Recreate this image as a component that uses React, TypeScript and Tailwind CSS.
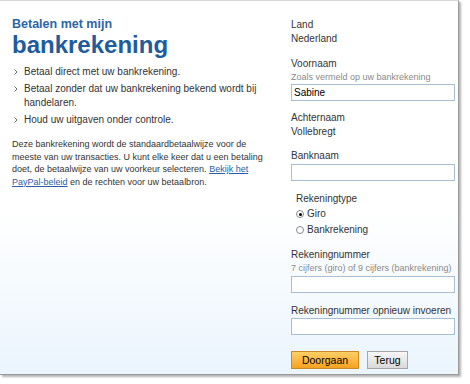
import React from "react";

function Bullet({ children }: { children: React.ReactNode }) {
  return (
    <li className="flex items-start gap-[5px]">
      <svg width="6" height="14" viewBox="0 0 6 14" className="shrink-0 ml-[1px]">
        <polyline points="1.5,4.5 4,7 1.5,9.5" fill="none" stroke="#6b6b6b" strokeWidth="1" />
      </svg>
      <span>{children}</span>
    </li>
  );
}

function TextInput({ value = "" }: { value?: string }) {
  return (
    <div className="w-[164px] h-[17px] border border-[#a9bdd3] bg-white px-[2px] text-[10px] leading-[15px] text-black">
      {value}
    </div>
  );
}

function Radio({ checked, label }: { checked?: boolean; label: string }) {
  return (
    <div className="flex items-center h-[16px] gap-[3px]">
      <span className="w-[8px] h-[8px] rounded-full border border-[#8a8a8a] bg-white flex items-center justify-center">
        {checked && <span className="w-[3px] h-[3px] rounded-full bg-black" />}
      </span>
      <span>{label}</span>
    </div>
  );
}

export default function App() {
  return (
    <div className="w-[470px] h-[384px] bg-white font-['Liberation_Sans',Arial,sans-serif] text-[#333]">
      <div className="w-[459px] h-[375px] flex border-t border-t-[#d6d6d6] border-r border-b border-r-[#9a9a9a] border-b-[#9a9a9a] shadow-[2px_2px_2px_rgba(0,0,0,0.3)] bg-gradient-to-b from-white from-55% to-[#ebf5fd]">
        {/* left column */}
        <div className="w-[278px] pl-3 pt-[17px]">
          <h1 className="text-[12.5px] leading-[13px] font-bold text-[#2d66a6]">Betalen met mijn</h1>
          <h2 className="text-[24px] leading-[27px] font-bold text-[#205c9d]">bankrekening</h2>
          <ul className="mt-[7px] text-[10px] leading-[14px] space-y-[3px]">
            <Bullet>Betaal direct met uw bankrekening.</Bullet>
            <Bullet>
              Betaal zonder dat uw bankrekening bekend wordt bij
              <br />
              handelaren.
            </Bullet>
            <Bullet>Houd uw uitgaven onder controle.</Bullet>
          </ul>
          <p className="mt-[11px] text-[9px] leading-[12.5px] whitespace-nowrap">
            Deze bankrekening wordt de standaardbetaalwijze voor de
            <br />
            meeste van uw transacties. U kunt elke keer dat u een betaling
            <br />
            doet, de betaalwijze van uw voorkeur selecteren.{" "}
            <a className="text-[#2a5ea8] underline">Bekijk het</a>
            <br />
            <a className="text-[#2a5ea8] underline">PayPal-beleid</a> en de rechten voor uw betaalbron.
          </p>
        </div>

        {/* right column */}
        <div className="pl-[13px] pt-[17px] text-[10px] leading-[14px]">
          <div>Land</div>
          <div>Nederland</div>

          <div className="mt-[11px]">Voornaam</div>
          <div className="text-[9px] leading-[12px] text-[#8a8a8a]">Zoals vermeld op uw bankrekening</div>
          <div className="mt-[1px]">
            <TextInput value="Sabine" />
          </div>

          <div className="mt-[10px]">Achternaam</div>
          <div>Vollebregt</div>

          <div className="mt-[10px]">Banknaam</div>
          <div className="mt-[1px]">
            <TextInput />
          </div>

          <div className="mt-[11px] pl-[5px]">
            <div>Rekeningtype</div>
            <Radio checked label="Giro" />
            <Radio label="Bankrekening" />
          </div>

          <div className="mt-[10px]">Rekeningnummer</div>
          <div className="text-[9px] leading-[12px] text-[#8a8a8a]">7 cijfers (giro) of 9 cijfers (bankrekening)</div>
          <div className="mt-[2px]">
            <TextInput />
          </div>

          <div className="mt-[11px]">Rekeningnummer opnieuw invoeren</div>
          <TextInput />

          <div className="mt-[16px] flex gap-[8px]">
            <button className="w-[68px] h-[18px] border border-[#c98a27] bg-gradient-to-b from-[#ffd062] to-[#f6a11c] text-[10.5px] leading-[16px] text-black">
              Doorgaan
            </button>
            <button className="w-[41px] h-[18px] border border-[#a6a6a6] bg-gradient-to-b from-[#f7f7f7] to-[#d9d9d9] text-[10.5px] leading-[16px] text-black">
              Terug
            </button>
          </div>
        </div>
      </div>
    </div>
  );
}
